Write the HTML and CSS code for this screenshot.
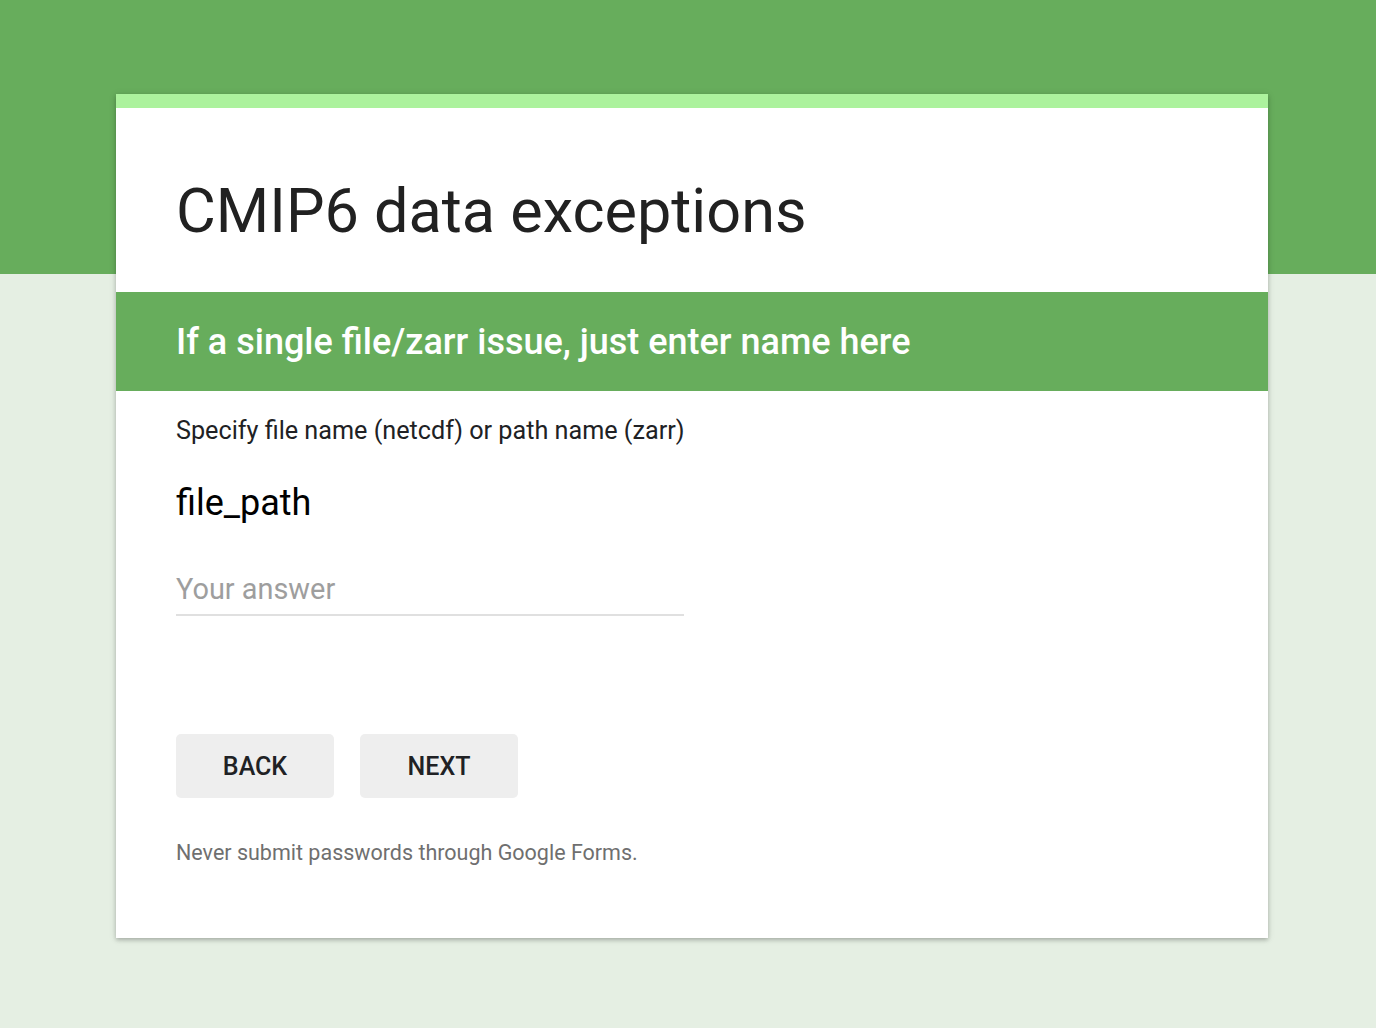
FILE: index.html
```html
<!DOCTYPE html>
<html>
<head>
<meta charset="utf-8">
<link rel="stylesheet" href="styles.css">
</head>
<body>
<div class="band"></div>
<main class="page">
  <div class="card">
    <div class="stripe"></div>
    <div class="title-area">
      <h1 class="title">CMIP6 data exceptions</h1>
    </div>
    <div class="section-head">If a single file/zarr issue, just enter name here</div>
    <div class="body">
      <p class="desc">Specify file name (netcdf) or path name (zarr)</p>
      <div class="question">file_path</div>
      <div class="answer">Your answer</div>
      <div class="buttons">
        <button class="btn">BACK</button>
        <button class="btn">NEXT</button>
      </div>
      <p class="warn">Never submit passwords through Google Forms.</p>
    </div>
  </div>
  <footer class="footer">This content is neither created nor endorsed by Google. Report Abuse - Terms of Service - Privacy Policy</footer>
</main>
</body>
</html>
```

FILE: styles.css
```css
html, body {
  margin: 0;
  padding: 0;
}
body {
  background: #e5efe3;
  font-family: Roboto, "Liberation Sans", Arial, sans-serif;
  color: #202124;
  position: relative;
  min-height: 1028px;
  overflow: hidden;
}
.band {
  position: absolute;
  left: 0;
  top: 0;
  width: 100%;
  height: 274px;
  background: #67ad5c;
}
.page {
  position: relative;
  padding-top: 94px;
  padding-left: 8px;
  display: flex;
  flex-direction: column;
  align-items: center;
}
.card {
  width: 1152px;
  background: #fff;
  box-shadow: 0 2px 4px rgba(0,0,0,0.22), 0 1px 8px rgba(0,0,0,0.1);
}
.stripe {
  height: 14px;
  background: #acf29d;
}
.title-area {
  height: 184px;
  padding: 0 60px;
  box-sizing: border-box;
  display: flex;
  align-items: flex-start;
}
.title {
  margin: 0;
  margin-top: 68px;
  font-size: 61.2px;
  font-weight: 400;
  line-height: 70px;
  color: #212121;
}
.section-head {
  height: 99px;
  background: #67ad5c;
  color: #fff;
  font-size: 36px;
  font-weight: 500;
  padding: 0 60px;
  display: flex;
  align-items: center;
  box-sizing: border-box;
}
.body {
  padding: 0 60px 72px;
}
.desc {
  margin: 0;
  padding-top: 25px;
  font-size: 25.2px;
  line-height: 30px;
  color: #202124;
}
.question {
  margin-top: 36px;
  font-size: 36px;
  line-height: 42px;
  color: #000;
}
.answer {
  margin-top: 46px;
  width: 508px;
  font-size: 28.9px;
  line-height: 38px;
  color: #9e9e9e;
  border-bottom: 2px solid #e0e0e0;
  padding-bottom: 6px;
  box-sizing: border-box;
}
.buttons {
  display: flex;
  gap: 26px;
  margin-top: 118px;
}
.btn {
  width: 158px;
  height: 64px;
  border: none;
  border-radius: 5px;
  background: #eeeeee;
  font-family: Roboto, "Liberation Sans", Arial, sans-serif;
  font-size: 25px;
  font-weight: 500;
  color: #202124;
  padding: 0;
}
.warn {
  margin: 42px 0 0;
  font-size: 21.5px;
  line-height: 26px;
  color: #6f6f6f;
}
.footer {
  margin-top: 88px;
  font-size: 18px;
  color: #757575;
  text-align: center;
}
```
